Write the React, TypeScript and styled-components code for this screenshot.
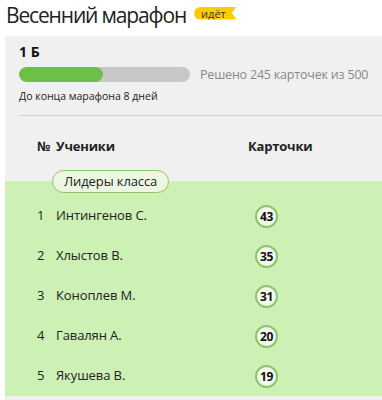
import React from 'react';
import styled, { createGlobalStyle } from 'styled-components';

const GlobalStyle = createGlobalStyle`
  body {
    margin: 0;
    background: #ffffff;
    font-family: 'Open Sans', 'Liberation Sans', sans-serif;
    color: #222;
  }
`;

const Page = styled.div`
  width: 382px;
  height: 400px;
  overflow: hidden;
  padding-left: 5px;
  box-sizing: border-box;
`;

const TitleRow = styled.div`
  display: flex;
  align-items: center;
  gap: 8px;
  height: 30px;
  padding-left: 1px;
`;

const Title = styled.h1`
  margin: 0;
  font-size: 21px;
  font-weight: 400;
  letter-spacing: -1.15px;
  color: #222;
  line-height: 28px;
`;

const Badge = styled.span`
  display: inline-flex;
  align-items: center;
  height: 13px;
  padding: 0 11px 0 7px;
  background: #ffcc00;
  color: #333;
  font-size: 11px;
  line-height: 13px;
  border-radius: 7px 0 0 7px;
  clip-path: polygon(0 0, 100% 0, calc(100% - 5px) 50%, 100% 100%, 0 100%);
  margin-top: -4px;
`;

const Panel = styled.div`
  margin-top: 6px;
  background: #f0f0f0;
  width: 400px;
  padding-top: 6px;
  height: 370px;
`;

const Summary = styled.div`
  padding: 0 0 12px 14px;
`;

const ClassName = styled.div`
  font-size: 14px;
  font-weight: 700;
  line-height: 20px;
  color: #111;
`;

const ProgressRow = styled.div`
  display: flex;
  align-items: center;
  gap: 10px;
  margin-top: 4px;
`;

const Track = styled.div`
  width: 171px;
  height: 15px;
  border-radius: 8px;
  background: #c8c8c8;
  overflow: hidden;
`;

const Fill = styled.div`
  height: 100%;
  border-radius: 8px;
  background: #6cbf47;
`;

const ProgressText = styled.span`
  font-size: 12.5px;
  letter-spacing: -0.2px;
  color: #888;
`;

const Deadline = styled.div`
  font-size: 10.5px;
  color: #222;
  margin-top: 6px;
`;

const Divider = styled.div`
  margin-left: 14px;
  height: 1px;
  background: #e2c9c9;
`;

const TableHead = styled.div`
  display: grid;
  grid-template-columns: 19px 192px auto;
  box-sizing: border-box;
  padding: 22px 0 0 32px;
  height: 65px;
  font-size: 13px;
  line-height: 16px;
  letter-spacing: -0.2px;
  font-weight: 700;
  color: #222;
`;

const Leaders = styled.div`
  display: flex;
  flex-direction: column;
  align-items: flex-start;
  background: #cdf0b4;
  padding-bottom: 1px;
`;

const LeadersPill = styled.div`
  box-sizing: border-box;
  margin: -11px 0 0 47px;
  padding: 0 11px;
  height: 23px;
  line-height: 20px;
  border: 1.5px solid #8cc46c;
  border-radius: 12px;
  background: #ecf7e2;
  font-size: 13px;
  letter-spacing: -0.1px;
  color: #222;
`;

const List = styled.div`
  align-self: stretch;
  margin-top: 2px;
`;

const Row = styled.div`
  display: grid;
  grid-template-columns: 19px 192px auto;
  align-items: center;
  padding-left: 32px;
  height: 40px;
  font-size: 13px;
  letter-spacing: -0.1px;
  color: #222;
`;

const Count = styled.span`
  box-sizing: border-box;
  width: 23px;
  height: 23px;
  margin: 2px 0 0 7px;
  border-radius: 50%;
  border: 2px solid #8cc46c;
  background: #f2faec;
  display: flex;
  align-items: center;
  justify-content: center;
  font-size: 12px;
  font-weight: 700;
  letter-spacing: -0.3px;
  color: #111;
`;

const students = [
  { n: 1, name: 'Интингенов С.', cards: 43 },
  { n: 2, name: 'Хлыстов В.', cards: 35 },
  { n: 3, name: 'Коноплев М.', cards: 31 },
  { n: 4, name: 'Гавалян А.', cards: 20 },
  { n: 5, name: 'Якушева В.', cards: 19 },
];

export default function App() {
  const solved = 245;
  const total = 500;
  return (
    <Page>
      <GlobalStyle />
      <TitleRow>
        <Title>Весенний марафон</Title>
        <Badge>идёт</Badge>
      </TitleRow>
      <Panel>
        <Summary>
          <ClassName>1 Б</ClassName>
          <ProgressRow>
            <Track>
              <Fill style={{ width: `${(solved / total) * 100}%` }} />
            </Track>
            <ProgressText>Решено {solved} карточек из {total}</ProgressText>
          </ProgressRow>
          <Deadline>До конца марафона 8 дней</Deadline>
        </Summary>
        <Divider />
        <TableHead>
          <span>№</span>
          <span>Ученики</span>
          <span>Карточки</span>
        </TableHead>
        <Leaders>
          <LeadersPill>Лидеры класса</LeadersPill>
          <List>
            {students.map((s) => (
              <Row key={s.n}>
                <span>{s.n}</span>
                <span>{s.name}</span>
                <Count>{s.cards}</Count>
              </Row>
            ))}
          </List>
        </Leaders>
      </Panel>
    </Page>
  );
}
